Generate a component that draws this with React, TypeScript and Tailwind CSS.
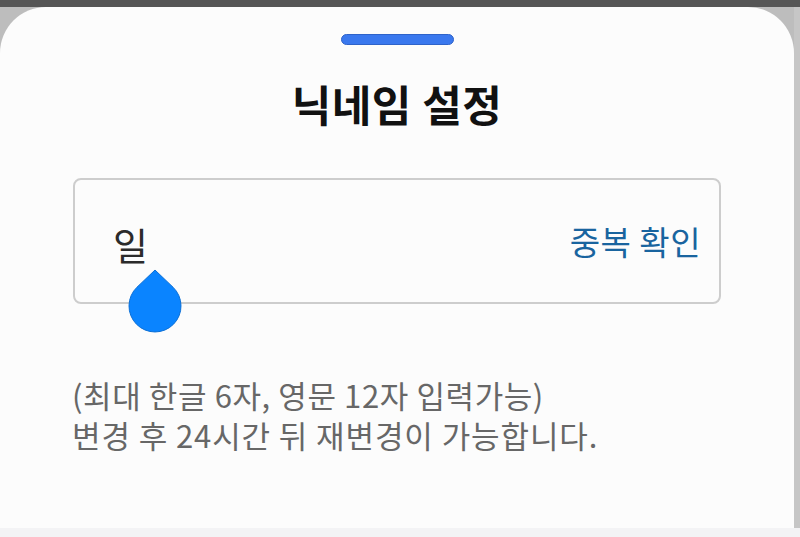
import React from 'react';

const font = { fontFamily: '"Noto Sans CJK KR", "Noto Sans", sans-serif' };

function SelectionHandle() {
  return (
    <svg
      width="54"
      height="64"
      viewBox="0 0 54 64"
      className="absolute left-[53px] top-[89px]"
    >
      <path
        d="M27 1 L45 18.2 A26 26 0 1 1 9 18.2 Z"
        fill="#0a84ff"
        stroke="#0b6fd6"
        strokeWidth="1"
      />
    </svg>
  );
}

export default function App() {
  return (
    <div className="w-[800px] h-[537px] bg-[#bdbdbd] overflow-hidden flex flex-col" style={font}>
      <div className="h-[7px] bg-[#565656] shrink-0" />
      <div className="flex flex-1">
        {/* Bottom sheet */}
        <div className="w-[794px] bg-[#fcfcfc] rounded-t-[46px] flex flex-col">
          <div className="mt-[27px] mx-auto w-[113px] h-[11px] rounded-full bg-[#3a78ee] border border-[#2f63c9]" />

          <h1 className="mt-[34px] text-center text-[43px] leading-[48px] font-bold text-[#111] tracking-[0.5px]">
            닉네임 설정
          </h1>

          <div className="relative mt-[51px] ml-[73px] w-[648px] h-[126px] border-2 border-[#cdcdcd] rounded-[8px] flex items-center justify-between pl-[38px] pr-[18px]">
            <span className="text-[38px] leading-none text-[#2b2b2b] mt-[6px]">일</span>
            <span className="text-[33px] leading-none text-[#19649f] tracking-[0.5px]">중복 확인</span>
            <SelectionHandle />
          </div>

          <div className="mt-[72px] ml-[72px] text-[31px] text-[#676767] flex flex-col gap-[2px]">
            <p className="leading-[38px] tracking-[0.6px]">(최대 한글 6자, 영문 12자 입력가능)</p>
            <p className="leading-[38px] tracking-[0.9px]">변경 후 24시간 뒤 재변경이 가능합니다.</p>
          </div>
        </div>
        <div className="w-[6px] bg-[#c6c6c6]" />
      </div>
      <div className="h-[9px] bg-[#f3f3f5] shrink-0" />
    </div>
  );
}
